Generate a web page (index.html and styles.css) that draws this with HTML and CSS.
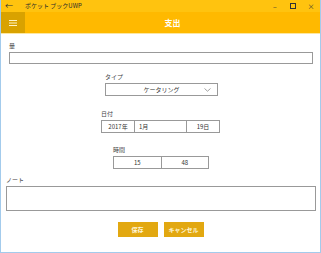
FILE: index.html
```html
<!DOCTYPE html>
<html lang="ja">
<head>
    <meta charset="UTF-8">
    <title>ポケット ブックUWP</title>
    <link rel="stylesheet" href="styles.css">
</head>
<body>
    <div class="window">
        <div class="titlebar">
            <span class="back">&#8592;</span>
            <span class="app-name">ポケット ブックUWP</span>
            <div class="controls">
                <span class="ctl">&#8211;</span>
                <span class="ctl max"></span>
                <span class="ctl">&#215;</span>
            </div>
        </div>
        <div class="header">
            <div class="menu">
                <svg width="10" height="8" viewBox="0 0 10 8">
                    <path d="M1 1.5H9M1 4H9M1 6.5H9" stroke="#fff3c4" stroke-width="1"/>
                </svg>
            </div>
            <h1>支出</h1>
        </div>

        <div class="content">
            <div class="field amount">
                <label>量</label>
                <div class="box"></div>
            </div>

            <div class="field type">
                <label>タイプ</label>
                <div class="box select">
                    <span>ケータリング</span>
                    <svg class="chev" width="7" height="4" viewBox="0 0 7 4">
                        <path d="M0.5 0.5L3.5 3.2L6.5 0.5" fill="none" stroke="#888" stroke-width="0.8"/>
                    </svg>
                </div>
            </div>

            <div class="field date">
                <label>日付</label>
                <div class="box split">
                    <span class="year">2017年</span>
                    <span class="month">1月</span>
                    <span class="day">19日</span>
                </div>
            </div>

            <div class="field time">
                <label>時間</label>
                <div class="box split">
                    <span class="half">15</span>
                    <span class="half">48</span>
                </div>
            </div>

            <div class="field note">
                <label>ノート</label>
                <div class="box"></div>
            </div>

            <div class="actions">
                <button>保存</button>
                <button>キャンセル</button>
            </div>
        </div>
    </div>
</body>
</html>
```

FILE: styles.css
```css
body {
    margin: 0;
    font-family: "Noto Sans CJK JP", "Noto Sans", sans-serif;
    background: #fff;
    color: #333;
}
.window {
    width: 321px;
    height: 253px;
    box-sizing: border-box;
    border-left: 1px solid #a3cbec;
    border-right: 1px solid #a3cbec;
    border-bottom: 1px solid #a3cbec;
    overflow: hidden;
}
.titlebar {
    height: 12px;
    background-color: #ffc30f;
    display: flex;
    align-items: center;
    font-size: 6px;
    color: #333;
}
.back {
    width: 16px;
    text-align: center;
    font-size: 8px;
    line-height: 12px;
}
.app-name {
    margin-left: 8px;
    font-size: 6px;
    line-height: 12px;
    color: #2a2a2a;
}
.controls {
    margin-left: auto;
    display: flex;
}
.ctl {
    width: 18px;
    text-align: center;
    font-size: 7px;
    line-height: 12px;
}
.ctl.max {
    display: flex;
    justify-content: center;
    align-items: center;
}
.ctl.max::before {
    content: "";
    width: 4px;
    height: 4px;
    border: 1px solid #333;
}
.header {
    height: 21px;
    background-color: #ffb900;
    border-bottom: 1px solid #fde7a0;
    display: flex;
    align-items: center;
}
.menu {
    width: 24px;
    height: 21px;
    background-color: #d9a200;
    display: flex;
    align-items: center;
    justify-content: center;
}
.header h1 {
    flex: 1;
    margin: 0;
    text-align: center;
    font-size: 8px;
    font-weight: bold;
    color: #fff;
}
.content {
    padding-top: 7px;
}
.field label {
    display: block;
    font-size: 6px;
    line-height: 9px;
    height: 9px;
    color: #444;
    margin-bottom: 2px;
}
.box {
    box-sizing: border-box;
    border: 1px solid #999;
    height: 13px;
    font-size: 6px;
    color: #333;
}
.amount {
    margin-left: 8px;
    width: 304px;
}
.amount .box {
    height: 12px;
}
.type {
    margin: 8px 0 0 104px;
    width: 113px;
}
.select {
    display: flex;
    align-items: center;
    justify-content: center;
    position: relative;
}
.select .chev {
    position: absolute;
    right: 6px;
    top: 4px;
}
.date {
    margin: 13px 0 0 100px;
    width: 119px;
}
.split {
    display: flex;
    align-items: center;
}
.split span {
    height: 100%;
    display: flex;
    align-items: center;
    box-sizing: border-box;
}
.year {
    width: 33px;
    justify-content: center;
    border-right: 1px solid #999;
}
.month {
    width: 52px;
    padding-left: 4px;
    border-right: 1px solid #999;
}
.day {
    flex: 1;
    justify-content: center;
}
.time {
    margin: 12px 0 0 112px;
    width: 96px;
}
.half {
    flex: 1;
    justify-content: center;
}
.half:first-child {
    border-right: 1px solid #999;
}
.note {
    margin: 6px 0 0 5px;
    width: 310px;
}
.note .box {
    height: 25px;
}
.actions {
    margin-top: 11px;
    display: flex;
    justify-content: center;
    gap: 6px;
}
.actions button {
    width: 40px;
    height: 15px;
    border: none;
    padding: 0;
    background-color: #e2a811;
    color: #fff6d8;
    font-family: inherit;
    font-size: 6px;
    font-weight: bold;
}
```
